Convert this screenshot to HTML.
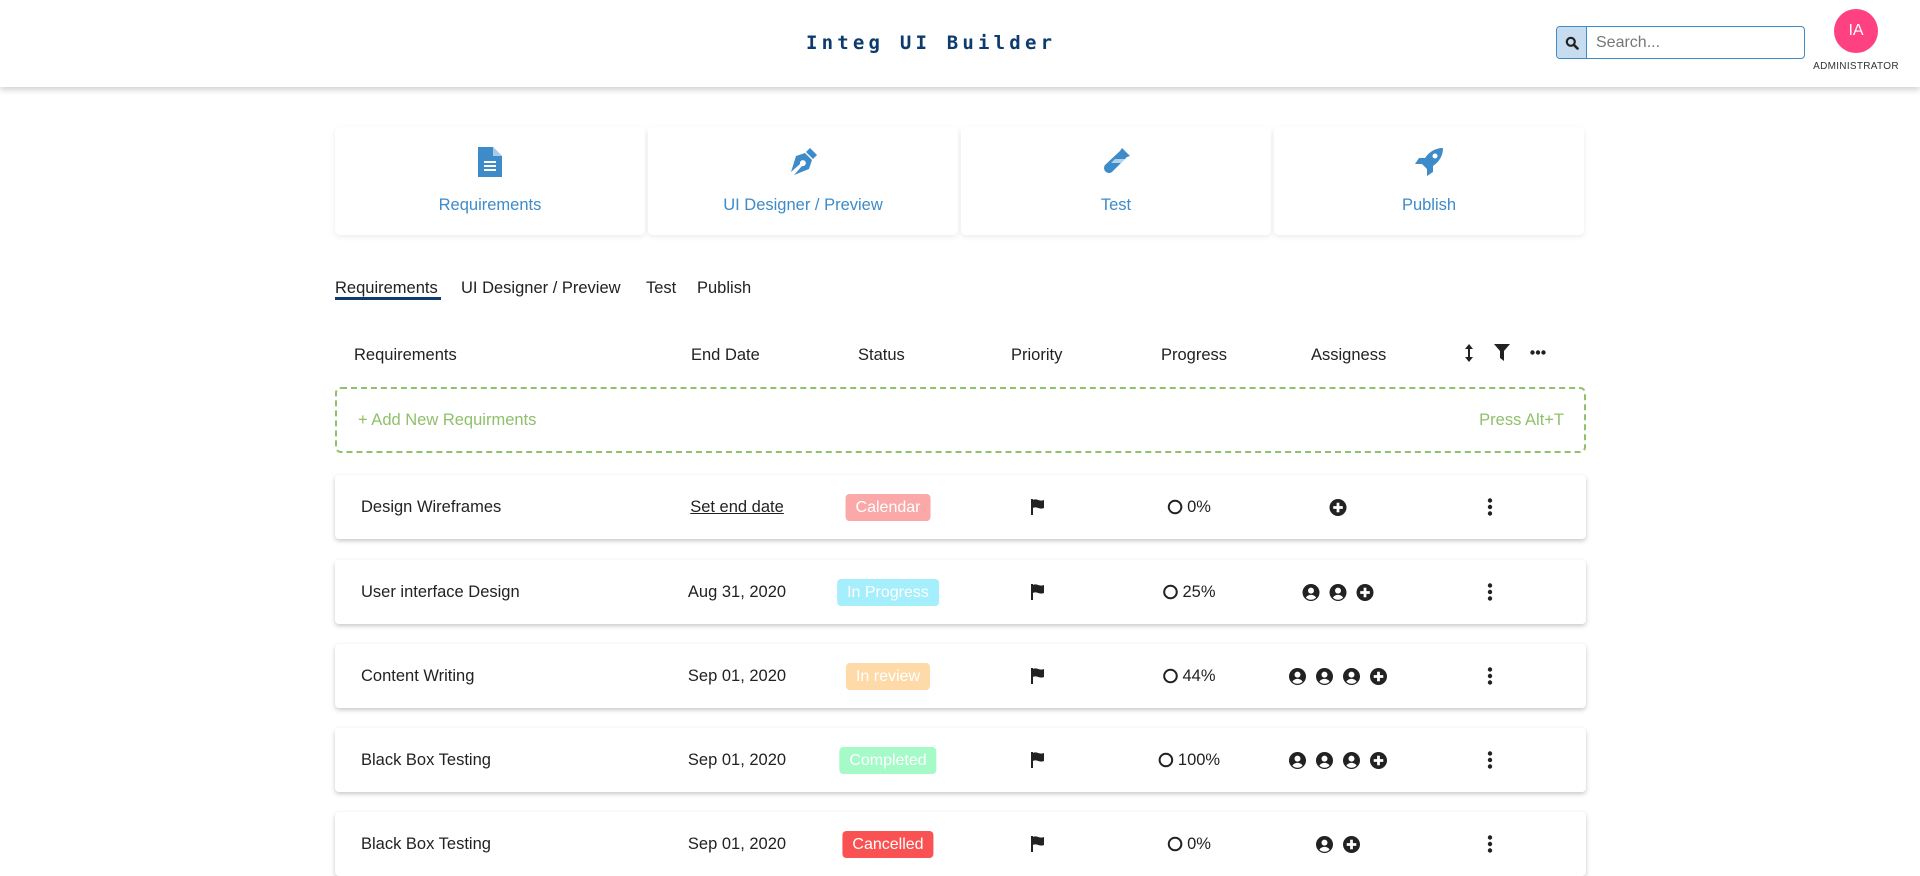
<!DOCTYPE html>
<html><head><meta charset="utf-8"><style>
*{box-sizing:border-box;margin:0;padding:0}
body{width:1920px;height:867px;overflow:hidden;background:#fff;font-family:"Liberation Sans",Arial,sans-serif;color:#222;position:relative}
.hdr{position:absolute;left:0;top:0;width:1920px;height:87px;background:#fff;box-shadow:0 3px 6px rgba(0,0,0,.18);z-index:2}
.title{position:absolute;left:806px;top:32px;font-family:"DejaVu Sans Mono","Liberation Mono",monospace;font-weight:bold;font-size:19px;letter-spacing:4.2px;color:#0d3b6e;white-space:nowrap}
.search{position:absolute;left:1556px;top:26px;width:249px;height:33px;border:1px solid #3d8bc9;border-radius:4px;overflow:hidden;display:flex}
.search .ic{width:30px;background:#c7dcee;border-right:1px solid #3d8bc9;display:flex;align-items:center;justify-content:center}
.search .in{padding-left:9px;line-height:31px;font-size:16px;color:#777}
.av{position:absolute;left:1834px;top:9px;width:44px;height:44px;border-radius:50%;background:#ff4081;color:#fff;font-size:16px;text-align:center;line-height:44px}
.adm{position:absolute;left:1810px;top:61px;width:92px;text-align:center;font-size:10px;color:#333;letter-spacing:.3px}
.card{position:absolute;top:127px;width:310px;height:108px;background:#fff;border-radius:5px;box-shadow:0 2px 6px rgba(0,0,0,.08);text-align:center}
.card svg{position:absolute;left:50%;top:20px;transform:translateX(-50%)}
.card .l{position:absolute;left:0;right:0;top:69px;font-size:16.5px;color:#3d8bc9}
.tab{position:absolute;top:279px;font-size:16.5px;color:#222}
.ul{position:absolute;left:335px;top:297px;width:106px;height:3px;background:#0d3b6e}
.th{position:absolute;top:346px;font-size:16.5px;color:#222}
.add{position:absolute;left:335px;top:387px;width:1251px;height:66px;border:2px dashed #8fc06a;border-radius:6px}
.add span{position:absolute;top:22px;font-size:16.5px;color:#8fc06a}
.row{position:absolute;left:335px;width:1251px;height:64px;background:#fff;border-radius:4px;box-shadow:0 2px 5px rgba(0,0,0,.22)}
.row .c{position:absolute;top:0;height:64px;display:flex;align-items:center;font-size:16.5px;color:#222}
.badge{padding:0 10px;height:27px;line-height:27px;border-radius:4px;color:#fff;font-size:16px}
.cc{transform:translateX(-50%);justify-content:center;white-space:nowrap}
</style></head><body>
<div class="hdr">
<div class="title">Integ UI Builder</div>
<div class="search"><div class="ic"><svg width="14" height="14" viewBox="0 0 14 14"><circle cx="5.8" cy="5.8" r="4" fill="none" stroke="#222" stroke-width="2.2"/><line x1="8.8" y1="8.8" x2="12.5" y2="12.5" stroke="#222" stroke-width="2.6" stroke-linecap="round"/></svg></div><div class="in">Search...</div></div>
<div class="av">IA</div>
<div class="adm">ADMINISTRATOR</div>
</div>

<div class="card" style="left:335px"><svg width="24" height="30" viewBox="0 0 24 30"><path d="M0 0h15l9 9v21H0z" fill="#3d8bc9"/><path d="M15 0v9h9" fill="#a9cbe8"/><rect x="6" y="14" width="12" height="2" fill="#fff"/><rect x="6" y="18" width="12" height="2" fill="#fff"/><rect x="6" y="22" width="12" height="2" fill="#fff"/></svg><div class="l">Requirements</div></div>
<div class="card" style="left:648px"><svg width="30" height="30" viewBox="0 0 30 30"><path d="M22 1l7 7-4 4-7-7z" fill="#3d8bc9"/><path d="M17 6l7 7-3 9L6 28l8-9a3 3 0 1 0-2-2l-9 8L8 9z" fill="#3d8bc9"/></svg><div class="l">UI Designer / Preview</div></div>
<div class="card" style="left:961px"><svg width="30" height="30" viewBox="0 0 30 30"><path d="M21 1l8 8-3 1L11 25a5 5 0 0 1-7-7L19 4z" fill="#3d8bc9"/><path d="M14 12h10l-4 4H10z" fill="#fff" opacity=".6"/></svg><div class="l">Test</div></div>
<div class="card" style="left:1274px"><svg width="30" height="30" viewBox="0 0 30 30"><path d="M29 1c-8 0-14 4-18 10H5l-4 6h7l5 5v7l6-4v-6c6-4 10-10 10-18z" fill="#3d8bc9"/><circle cx="21" cy="9" r="2.5" fill="#fff"/></svg><div class="l">Publish</div></div>

<div class="tab" style="left:335px">Requirements</div>
<div class="tab" style="left:461px">UI Designer / Preview</div>
<div class="tab" style="left:646px">Test</div>
<div class="tab" style="left:697px">Publish</div>
<div class="ul"></div>

<div class="th" style="left:354px">Requirements</div>
<div class="th" style="left:691px">End Date</div>
<div class="th" style="left:858px">Status</div>
<div class="th" style="left:1011px">Priority</div>
<div class="th" style="left:1161px">Progress</div>
<div class="th" style="left:1311px">Assigness</div>
<svg style="position:absolute;left:1464px;top:343px" width="10" height="20" viewBox="0 0 10 20"><path d="M5 1L1 6h3v8H1l4 5 4-5H6V6h3z" fill="#222"/></svg>
<svg style="position:absolute;left:1494px;top:344px" width="16" height="17" viewBox="0 0 16 17"><path d="M0 0h16L10 7v10l-4-3V7z" fill="#222"/></svg>
<svg style="position:absolute;left:1530px;top:350px" width="16" height="5" viewBox="0 0 16 5"><circle cx="2.5" cy="2.5" r="2.2" fill="#222"/><circle cx="8" cy="2.5" r="2.2" fill="#222"/><circle cx="13.5" cy="2.5" r="2.2" fill="#222"/></svg>

<div class="add"><span style="left:21px">+ Add New Requirments</span><span style="right:20px">Press Alt+T</span></div>

<svg width="0" height="0" style="position:absolute"><defs>
<symbol id="flag" viewBox="0 0 16 16"><path d="M1 0h2v16H1zM3 1c4-2 6 2 11 0v8c-5 2-7-2-11 0z" fill="#222"/></symbol>
<symbol id="user" viewBox="0 0 16 16"><circle cx="8" cy="8" r="8" fill="#222"/><circle cx="8" cy="6.2" r="2.8" fill="#fff"/><path d="M3.2 12.8c1.2-2 3-2.6 4.8-2.6s3.6.6 4.8 2.6a6.6 6.6 0 0 1-9.6 0z" fill="#fff"/></symbol>
<symbol id="plus" viewBox="0 0 16 16"><circle cx="8" cy="8" r="8" fill="#222"/><rect x="6.7" y="3.5" width="2.6" height="9" fill="#fff"/><rect x="3.5" y="6.7" width="9" height="2.6" fill="#fff"/></symbol>
<symbol id="spin" viewBox="0 0 16 16"><circle cx="8" cy="8" r="6.3" fill="none" stroke="#222" stroke-width="2"/></symbol>
<symbol id="kebab" viewBox="0 0 6 18"><circle cx="3" cy="2.5" r="2.2" fill="#222"/><circle cx="3" cy="9" r="2.2" fill="#222"/><circle cx="3" cy="15.5" r="2.2" fill="#222"/></symbol>
</defs></svg>

<div class="row" style="top:475px">
<div class="c" style="left:26px">Design Wireframes</div>
<div class="c cc" style="left:402px;text-decoration:underline">Set end date</div>
<div class="c cc" style="left:553px"><span class="badge" style="background:#fba8a8">Calendar</span></div>
<div class="c cc" style="left:703px"><svg width="16" height="16"><use href="#flag"/></svg></div>
<div class="c cc" style="left:854px"><svg width="16" height="16" style="margin-right:4px"><use href="#spin"/></svg>0%</div>
<div class="c cc" style="left:1003px"><svg width="17" height="17"><use href="#plus"/></svg></div>
<div class="c cc" style="left:1155px"><svg width="6" height="18"><use href="#kebab"/></svg></div>
</div>
<div class="row" style="top:560px">
<div class="c" style="left:26px">User interface Design</div>
<div class="c cc" style="left:402px">Aug 31, 2020</div>
<div class="c cc" style="left:553px"><span class="badge" style="background:#a5eefb">In Progress</span></div>
<div class="c cc" style="left:703px"><svg width="16" height="16"><use href="#flag"/></svg></div>
<div class="c cc" style="left:854px"><svg width="16" height="16" style="margin-right:4px"><use href="#spin"/></svg>25%</div>
<div class="c cc" style="left:1003px;gap:10px"><svg width="17" height="17"><use href="#user"/></svg><svg width="17" height="17"><use href="#user"/></svg><svg width="17" height="17"><use href="#plus"/></svg></div>
<div class="c cc" style="left:1155px"><svg width="6" height="18"><use href="#kebab"/></svg></div>
</div>
<div class="row" style="top:644px">
<div class="c" style="left:26px">Content Writing</div>
<div class="c cc" style="left:402px">Sep 01, 2020</div>
<div class="c cc" style="left:553px"><span class="badge" style="background:#fddaa8">In review</span></div>
<div class="c cc" style="left:703px"><svg width="16" height="16"><use href="#flag"/></svg></div>
<div class="c cc" style="left:854px"><svg width="16" height="16" style="margin-right:4px"><use href="#spin"/></svg>44%</div>
<div class="c cc" style="left:1003px;gap:10px"><svg width="17" height="17"><use href="#user"/></svg><svg width="17" height="17"><use href="#user"/></svg><svg width="17" height="17"><use href="#user"/></svg><svg width="17" height="17"><use href="#plus"/></svg></div>
<div class="c cc" style="left:1155px"><svg width="6" height="18"><use href="#kebab"/></svg></div>
</div>
<div class="row" style="top:728px">
<div class="c" style="left:26px">Black Box Testing</div>
<div class="c cc" style="left:402px">Sep 01, 2020</div>
<div class="c cc" style="left:553px"><span class="badge" style="background:#a5fbc8">Completed</span></div>
<div class="c cc" style="left:703px"><svg width="16" height="16"><use href="#flag"/></svg></div>
<div class="c cc" style="left:854px"><svg width="16" height="16" style="margin-right:4px"><use href="#spin"/></svg>100%</div>
<div class="c cc" style="left:1003px;gap:10px"><svg width="17" height="17"><use href="#user"/></svg><svg width="17" height="17"><use href="#user"/></svg><svg width="17" height="17"><use href="#user"/></svg><svg width="17" height="17"><use href="#plus"/></svg></div>
<div class="c cc" style="left:1155px"><svg width="6" height="18"><use href="#kebab"/></svg></div>
</div>
<div class="row" style="top:812px">
<div class="c" style="left:26px">Black Box Testing</div>
<div class="c cc" style="left:402px">Sep 01, 2020</div>
<div class="c cc" style="left:553px"><span class="badge" style="background:#fa5252">Cancelled</span></div>
<div class="c cc" style="left:703px"><svg width="16" height="16"><use href="#flag"/></svg></div>
<div class="c cc" style="left:854px"><svg width="16" height="16" style="margin-right:4px"><use href="#spin"/></svg>0%</div>
<div class="c cc" style="left:1003px;gap:10px"><svg width="17" height="17"><use href="#user"/></svg><svg width="17" height="17"><use href="#plus"/></svg></div>
<div class="c cc" style="left:1155px"><svg width="6" height="18"><use href="#kebab"/></svg></div>
</div>
</body></html>
